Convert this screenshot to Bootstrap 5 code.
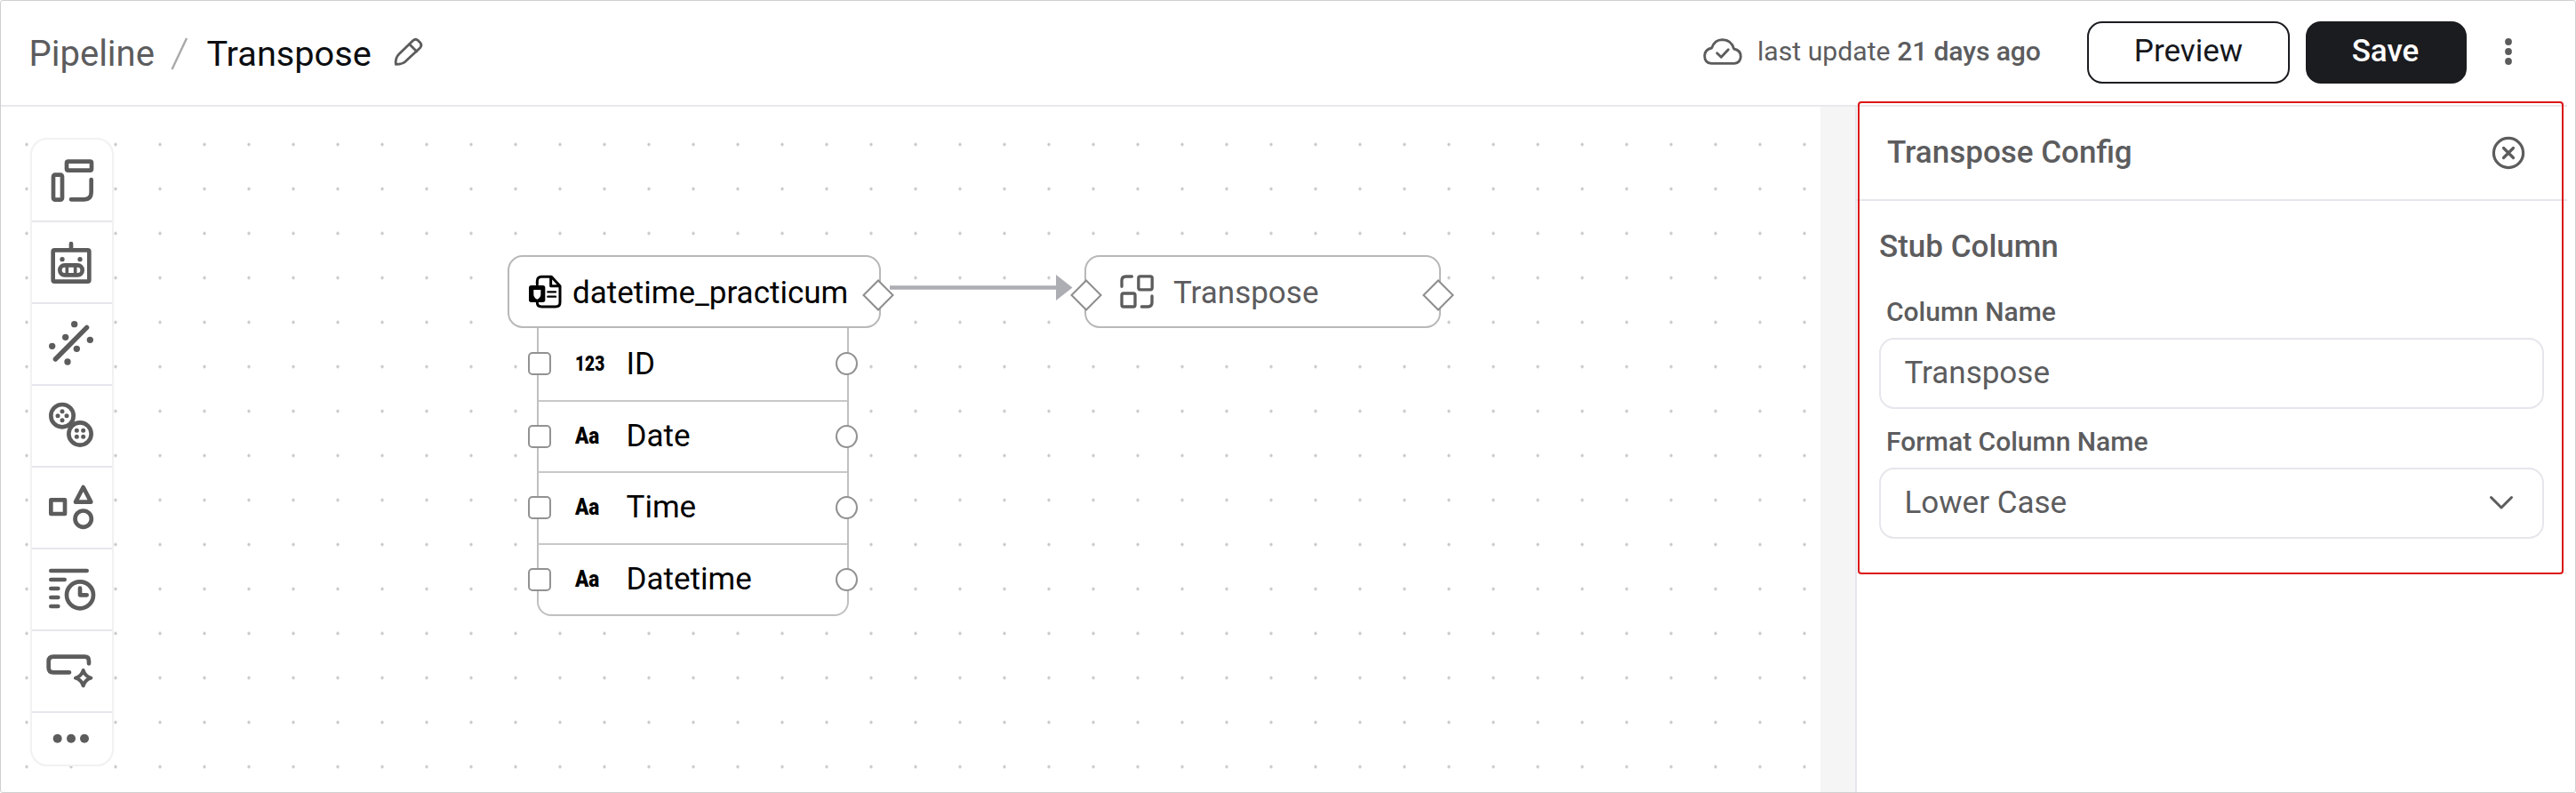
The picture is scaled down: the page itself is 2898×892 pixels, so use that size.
<!DOCTYPE html>
<html lang="en">
<head>
<meta charset="utf-8">
<title>Pipeline / Transpose</title>
<link rel="stylesheet" href="https://cdn.jsdelivr.net/npm/bootstrap@5.3.0/dist/css/bootstrap.min.css">
<style>
body{font-family:Roboto,"Liberation Sans",sans-serif;font-size:35px;line-height:42px;color:#5c5c5e;background:#fff;overflow:hidden}
svg{display:block;flex:none}
.ink{fill:none;stroke:#5c5c5c;stroke-linecap:round;stroke-linejoin:round}
.solid{fill:#5c5c5c;stroke:none}
.app-frame{width:2898px;height:892px;border:1px solid #cfcfcf;border-radius:3px}
.topbar{height:119px;border-bottom:2px solid #e8e8ed;padding-left:31.5px;padding-right:62px;margin-right:9px}
.crumbs{font-size:40px;line-height:48px;padding-top:2px}
.crumbs .now{font-size:39.7px;color:#0c0d10;margin-left:20px}
.slash{margin-left:18.5px}
.pencil{margin:0 0 5px 24px}
.cloud{margin-bottom:3px}
.updated{font-size:30.2px;width:320px;margin:0 51px 3px 16px;white-space:nowrap}
.updated b{font-weight:500;letter-spacing:-.15px}
.btn-top{height:70px;border-radius:17px;border:2.5px solid #1b1c20;font-size:35px;line-height:42px;padding:0 0 2px;color:#15171c;margin-bottom:1px}
.btn-save{background:#1b1c20;color:#fff;font-weight:500;width:181px;margin-left:18px;padding-right:2px}
.btn-preview{width:228px;background:#fff}
.kebab{margin:0 0 3px 43px}
.canvas{width:2047px;background-image:radial-gradient(circle,#c6c6c8 0,#c6c6c8 1.3px,transparent 2px);background-size:50px 50px;background-position:4px 17.5px}
.gutter{width:39px;background:#f5f5f5}
.tools{left:33px;top:35px;width:94px;height:707px;border:2px solid #f1f1f3;border-radius:19px;background:#fff;overflow:hidden}
.tools>div{height:92px;border-bottom:2px solid #e6e6ec}
.tools>div:first-child{height:93px}
.tools>div:last-child{height:58px;border:0}
.node{height:82px;border:2px solid #b8b8b8;border-radius:17px;background:#fff;top:167px}
.node-src{left:570px;width:420px;padding-left:21px;color:#000}
.node-src span{margin-left:10px}
.node-dst{left:1219px;width:401px;padding-left:36.5px}
.node-dst span{margin-left:21.5px}
.node span{padding-top:3px}
.fields{left:603px;top:249px;width:351px;height:324px;border:2px solid #c0c0c0;border-top:0;border-radius:0 0 16px 16px;background:#fff;color:#000;display:grid;grid-template-rows:82.5px 80px 81.5px 78px}
.fields>div{border-bottom:2px solid #c8c8c8;padding-left:41px}
.fields>div:first-child{padding-top:2px}
.fields>div:last-child{border:0}
.kind{width:57.5px;font-weight:900;line-height:30px}
.kind i{display:inline-block;font-style:normal;transform-origin:0 50%}
.k-num{font-size:23px}
.k-num i{transform:scaleX(.83)}
.k-txt{font-size:25px}
.k-txt i{transform:scaleX(.9)}
.pin-in,.pin-out{border:2px solid #929292;background:#fff;top:50%;transform:translateY(-50%)}
.pin-in{width:26px;height:26px;border-radius:5px;left:-12px}
.pin-out{width:25px;height:26px;border-radius:50%;right:-12px}
.port{width:36px;height:36px;top:24.500px}
.port-in{left:-18px}
.port-out{right:-16.500px}
.wire{left:1000px;top:188px}
.side{width:809px;border-left:2px solid #e6e6ec;padding-right:8px}
.side-head{height:106px;border-bottom:2px solid #e6e6ec;padding:0 47px 0 34px;font-weight:500}
.side-body{height:419px;padding:31px 26px 0 25px;border-bottom:1px solid #e8e8ec}
.stub{font-weight:500}
.field-name{font-size:30px;line-height:36px;font-weight:500;padding-left:8px;margin:19px 0 11px}
.stub+.field-name{margin-top:34px}
.field-box{height:80px;border:2px solid #e6e6ec;border-radius:17px;background:#fff;padding:0 32px 0 26.5px}
.spotlight{left:2089px;top:113px;width:794px;height:532px;border:2px solid #dc1616;border-radius:4px;pointer-events:none}
</style>
</head>
<body>
<div class="app-frame d-flex flex-column position-relative">
  <header class="topbar d-flex align-items-center flex-shrink-0">
    <div class="crumbs d-flex align-items-center">
      <span>Pipeline</span>
      <svg class="slash" width="20" height="38" viewBox="0 0 20 38"><path d="M1.5 36L18 1" stroke="#a9a9a9" stroke-width="2.4" fill="none"/></svg>
      <span class="now">Transpose</span>
      <svg class="pencil" width="36" height="36" viewBox="1328 119 108 108"><g class="ink" stroke-width="8.500"><path d="M1338 216Q1335 194 1349 181L1397 135Q1405 128 1412 135L1421 144Q1427 152 1420 160L1373 204Q1362 216 1338 216Z"/><path d="M1384 148L1408 172"/></g></svg>
    </div>
    <div class="d-flex align-items-center ms-auto">
      <svg class="cloud" width="46" height="32" viewBox="45 95 138 96"><g class="ink" stroke-width="8.500"><path d="M76 183Q53 181 53 157Q54 136 77 131Q87 103 113 103Q144 104 152 134Q175 138 175 160Q174 181 154 183Z"/><path d="M95 148L109 162L133 136"/></g></svg>
      <div class="updated">last update <b>21 days ago</b></div>
      <button class="btn btn-top btn-preview">Preview</button>
      <button class="btn btn-top btn-save">Save</button>
      <svg class="kebab" width="8" height="30" viewBox="0 0 8 30"><g class="solid"><circle cx="4" cy="4" r="3.9"/><circle cx="4" cy="15" r="3.9"/><circle cx="4" cy="26" r="3.9"/></g></svg>
    </div>
  </header>

  <main class="d-flex flex-grow-1">
    <section class="canvas position-relative flex-shrink-0">
      <nav class="tools position-absolute">
        <div><svg width="90" height="90" viewBox="0 0 270 270"><g class="ink" stroke-width="14"><rect x="117" y="74" width="84" height="30" rx="5"/><rect x="72" y="119" width="30" height="84" rx="6"/><path d="M132 202H176Q200 202 200 178V135"/></g></svg></div>
        <div><svg width="90" height="90" viewBox="0 0 270 270"><g class="ink" stroke-width="14"><rect x="71" y="94" width="122" height="106" rx="5"/><path d="M132 72V92"/><rect x="94" y="145" width="76" height="33" rx="16"/><path d="M118 147V176M146 147V176" stroke-width="11"/></g><g class="solid"><circle cx="102" cy="125" r="8"/><circle cx="162" cy="125" r="8"/></g></svg></div>
        <div><svg width="90" height="90" viewBox="0 0 270 270"><path class="ink" stroke-width="16" d="M79 186L185 79"/><g class="solid"><circle cx="143" cy="68" r="11"/><circle cx="113" cy="112" r="11"/><circle cx="196" cy="121" r="11"/><circle cx="151" cy="151" r="11"/><circle cx="68" cy="142" r="11"/><circle cx="120" cy="195" r="11"/></g></svg></div>
        <div><svg width="90" height="90" viewBox="0 0 270 270"><g class="ink" stroke-width="14"><circle cx="102" cy="101" r="38"/><circle cx="162" cy="162" r="38"/></g><g class="solid"><circle cx="102" cy="86" r="7.5"/><circle cx="87" cy="101" r="7.5"/><circle cx="117" cy="101" r="7.5"/><circle cx="102" cy="116" r="7.5"/><circle cx="151" cy="151" r="7.5"/><circle cx="173" cy="151" r="7.5"/><circle cx="151" cy="172" r="7.5"/><circle cx="173" cy="172" r="7.5"/></g></svg></div>
        <div><svg width="90" height="90" viewBox="0 0 270 270"><g class="ink" stroke-width="14"><rect x="64" y="109" width="47" height="47"/><path d="M173 66L199 116H147Z"/><circle cx="173" cy="173" r="27.500"/></g></svg></div>
        <div><svg width="90" height="90" viewBox="0 0 270 270"><g class="ink" stroke-width="14"><path d="M64 72H185M64 102H110M64 132H88M64 162H88M64 192H88"/><circle cx="162" cy="154" r="45"/><path d="M162 131V154H185"/></g></svg></div>
        <div><svg width="90" height="90" viewBox="0 0 270 270"><g class="ink" stroke-width="14"><path d="M192 109V101Q192 86 178 86H72Q56 86 56 102V123Q56 139 72 139H126"/><path stroke-width="12" d="M173 132Q179 152 199 158Q179 164 173 184Q167 164 147 158Q167 152 173 132Z"/></g></svg></div>
        <div><svg width="90" height="58" viewBox="0 0 270 174"><g class="solid"><circle cx="86" cy="86" r="15"/><circle cx="132" cy="86" r="15"/><circle cx="177" cy="86" r="15"/></g></svg></div>
      </nav>

      <svg class="wire position-absolute" width="208" height="32" viewBox="0 0 208 32"><path d="M0 15.500H190" stroke="#adadb4" stroke-width="4.500"/><path d="M187 1L205.500 15.500L187 30Z" fill="#adadb4"/></svg>

      <div class="fields position-absolute">
        <div class="d-flex align-items-center position-relative"><i class="pin-in position-absolute"></i><span class="kind k-num"><i>123</i></span><span>ID</span><i class="pin-out position-absolute"></i></div>
        <div class="d-flex align-items-center position-relative"><i class="pin-in position-absolute"></i><span class="kind k-txt"><i>Aa</i></span><span>Date</span><i class="pin-out position-absolute"></i></div>
        <div class="d-flex align-items-center position-relative"><i class="pin-in position-absolute"></i><span class="kind k-txt"><i>Aa</i></span><span>Time</span><i class="pin-out position-absolute"></i></div>
        <div class="d-flex align-items-center position-relative"><i class="pin-in position-absolute"></i><span class="kind k-txt"><i>Aa</i></span><span>Datetime</span><i class="pin-out position-absolute"></i></div>
      </div>

      <div class="node node-src position-absolute d-flex align-items-center">
        <svg width="40" height="40" viewBox="129 111 120 120"><g fill="none" stroke="#000" stroke-width="9" stroke-linecap="round" stroke-linejoin="round"><path d="M160 146V136Q160 121 175 121H208L237 152V208Q237 222 222 222H175Q160 222 160 208M206 121V152H237"/><path d="M196 172H222M196 188H222" stroke-width="7"/></g><rect x="132" y="150" width="55" height="57" rx="8"/><path d="M148 165H172V182Q170 193 160 197Q150 193 148 182Z" fill="#fff"/></svg>
        <span>datetime_practicum</span>
        <svg class="port port-out position-absolute" viewBox="0 0 36 36"><path d="M18 1.500L34.500 18L18 34.500L1.500 18Z" fill="#fff" stroke="#8c8c8c" stroke-width="2"/></svg>
      </div>

      <div class="node node-dst position-absolute d-flex align-items-center">
        <svg width="40" height="40" viewBox="297 115 120 120"><g class="ink" stroke-width="10"><rect x="362.500" y="123.500" width="46" height="45" rx="6"/><rect x="306" y="181" width="45" height="45" rx="6"/><path d="M306 158V137Q306 124 320 124H340M408 190V212Q408 226 394 226H373"/></g></svg>
        <span>Transpose</span>
        <svg class="port port-in position-absolute" viewBox="0 0 36 36"><path d="M18 1.500L34.500 18L18 34.500L1.500 18Z" fill="#fff" stroke="#8c8c8c" stroke-width="2"/></svg>
        <svg class="port port-out position-absolute" viewBox="0 0 36 36"><path d="M18 1.500L34.500 18L18 34.500L1.500 18Z" fill="#fff" stroke="#8c8c8c" stroke-width="2"/></svg>
      </div>
    </section>

    <div class="gutter flex-shrink-0"></div>

    <aside class="side flex-shrink-0">
      <div class="side-head d-flex align-items-center justify-content-between">
        <span>Transpose Config</span>
        <svg width="38" height="38" viewBox="0 0 38 38"><g class="ink" stroke-width="3.200"><circle cx="19" cy="19" r="16.600"/><path d="M13.500 13.500L24.500 24.500M24.500 13.500L13.500 24.500"/></g></svg>
      </div>
      <div class="side-body">
        <div class="stub">Stub Column</div>
        <div class="field-name">Column Name</div>
        <div class="field-box d-flex align-items-center">Transpose</div>
        <div class="field-name">Format Column Name</div>
        <div class="field-box d-flex align-items-center justify-content-between">Lower Case
          <svg width="28" height="18" viewBox="0 0 28 18"><path class="ink" stroke-width="3" d="M2.500 2.500L14 14L25.500 2.500"/></svg>
        </div>
      </div>
    </aside>
  </main>
  <div class="spotlight position-absolute"></div>
</div>
<script src="https://cdn.jsdelivr.net/npm/bootstrap@5.3.0/dist/js/bootstrap.bundle.min.js"></script>
</body>
</html>
